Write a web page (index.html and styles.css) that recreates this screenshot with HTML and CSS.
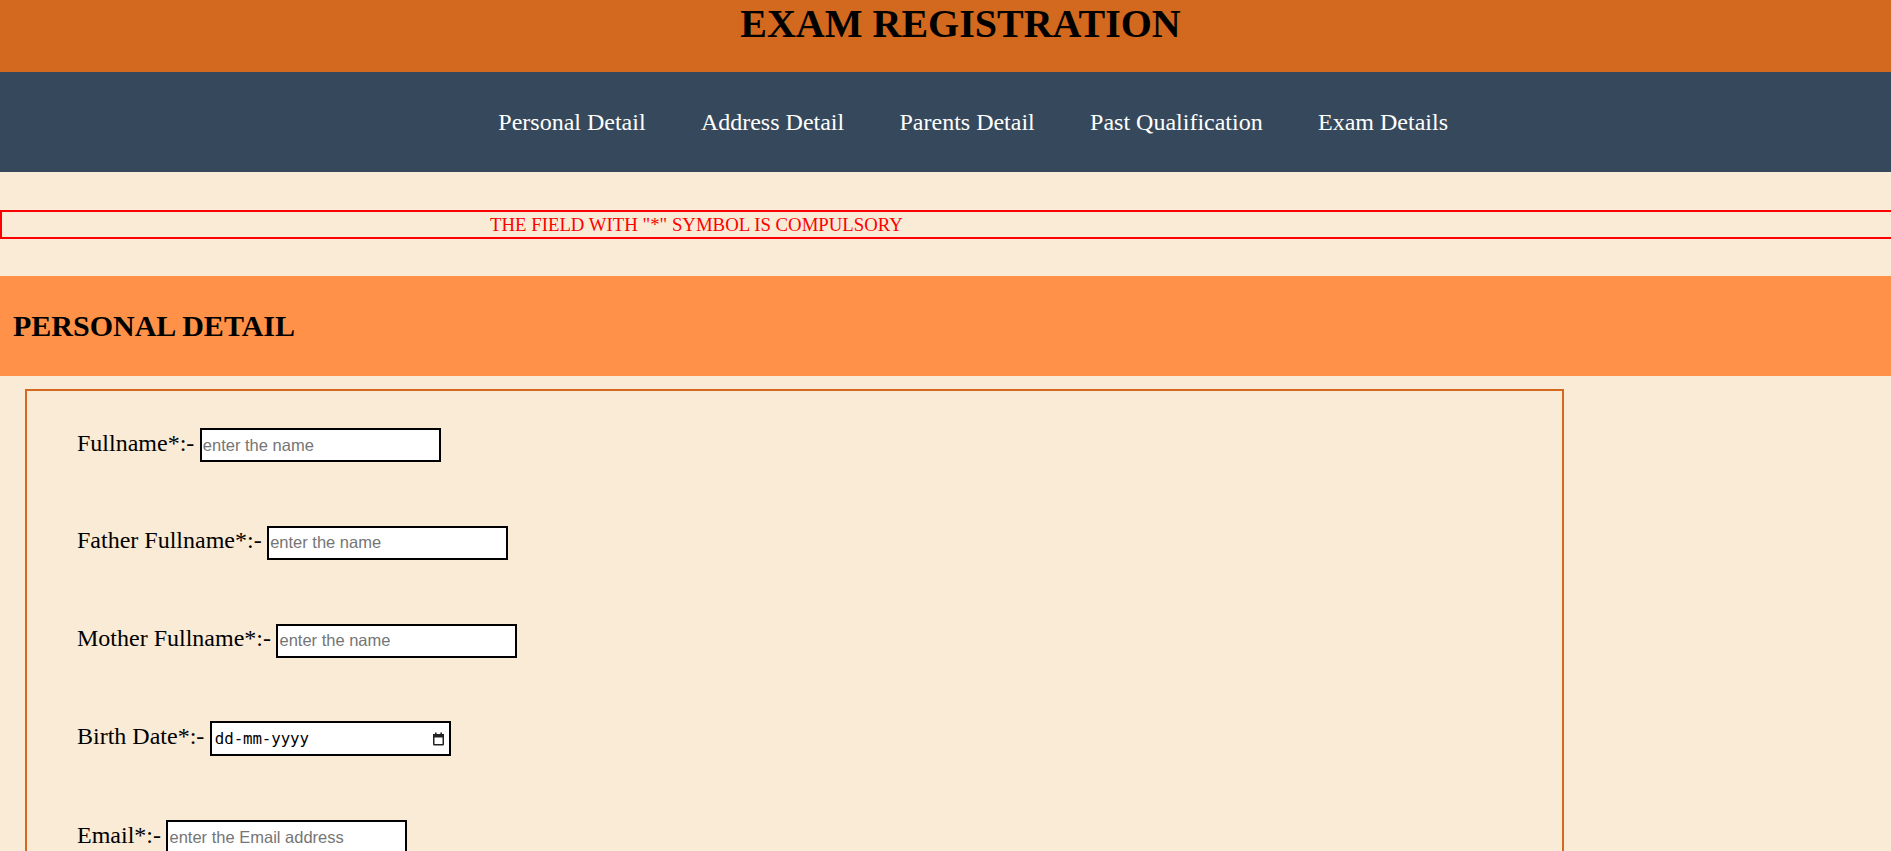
FILE: index.html
```html
<!DOCTYPE html>
<html lang="en">
<head>
<meta charset="utf-8">
<title>Exam Registration</title>
<link rel="stylesheet" href="styles.css">
</head>
<body>
<header class="top">
  <h1>EXAM REGISTRATION</h1>
</header>
<nav class="nav">
  <a href="#personal">Personal Detail</a>
  <a href="#address">Address Detail</a>
  <a href="#parents">Parents Detail</a>
  <a href="#past">Past Qualification</a>
  <a href="#exam">Exam Details</a>
</nav>
<div class="notice">THE FIELD WITH "*" SYMBOL IS COMPULSORY</div>
<section class="section" id="personal">
  <h2>PERSONAL DETAIL</h2>
</section>
<form class="box">
  <div class="row">
    <label for="fn">Fullname*:-</label>
    <input class="field" id="fn" type="text" placeholder="enter the name">
  </div>
  <div class="row">
    <label for="ffn">Father Fullname*:-</label>
    <input class="field" id="ffn" type="text" placeholder="enter the name">
  </div>
  <div class="row">
    <label for="mfn">Mother Fullname*:-</label>
    <input class="field" id="mfn" type="text" placeholder="enter the name">
  </div>
  <div class="row">
    <label for="bd">Birth Date*:-</label>
    <div class="date">
      <input class="date-text" id="bd" type="text" placeholder="dd-mm-yyyy">
      <svg class="cal" width="13" height="14" viewBox="0 0 13 14" aria-hidden="true">
        <rect x="1.75" y="2.75" width="9.5" height="10" fill="none" stroke="#222" stroke-width="1.5" rx="0.5"/>
        <rect x="1" y="2" width="11" height="3.5" fill="#222"/>
        <rect x="3" y="0.5" width="1.6" height="2.5" fill="#222"/>
        <rect x="8.4" y="0.5" width="1.6" height="2.5" fill="#222"/>
      </svg>
    </div>
  </div>
  <div class="row">
    <label for="em">Email*:-</label>
    <input class="field" id="em" type="email" placeholder="enter the Email address">
  </div>
</form>
</body>
</html>
```

FILE: styles.css
```css
* {
  box-sizing: border-box;
}

body {
  margin: 0;
  background: #faebd7;
  font-family: "Liberation Serif", "Times New Roman", serif;
  color: #000;
}

.top {
  background: #d2691e;
  height: 72px;
}

.top h1 {
  margin: 0;
  padding-left: 30px;
  text-align: center;
  font-size: 40px;
  font-weight: bold;
}

.nav {
  background: #36495c;
  height: 100px;
  display: flex;
  justify-content: center;
  align-items: center;
}

.nav a {
  color: #fff;
  text-decoration: none;
  font-size: 24px;
  margin-left: 55.3px;
}

.notice {
  margin-top: 38px;
  border: 2px solid #ff0000;
  border-right: 0;
  height: 29px;
  padding-left: 488px;
  color: #ff0000;
  font-size: 18.8px;
  line-height: 25px;
}

.section {
  margin-top: 37px;
  background: #ff9248;
  height: 100px;
  display: flex;
  align-items: center;
  padding-left: 13px;
}

.section h2 {
  margin: 0;
  font-size: 30px;
  font-weight: bold;
}

.box {
  margin: 13px 0 0 25px;
  width: 1539px;
  border: 2px solid #d2691e;
  padding: 37px 0 60px 50px;
  display: flex;
  flex-direction: column;
  gap: 63.8px;
}

.row {
  display: flex;
  align-items: baseline;
  gap: 5.5px;
}

.row label {
  font-size: 24px;
}

.field {
  width: 241px;
  height: 34px;
  border: 2px solid #000;
  padding: 1px 1px;
  margin: 0;
  background: #fff;
  font-family: "Liberation Sans", Arial, sans-serif;
  font-size: 16.5px;
  color: #000;
  outline: none;
}

.field::placeholder {
  color: #757575;
}

.date {
  width: 241px;
  height: 35px;
  border: 2px solid #000;
  background: #fff;
  display: flex;
  align-items: center;
  padding: 0 4px 0 2px;
}

.date-text {
  flex: 1;
  min-width: 0;
  border: 0;
  padding: 0 0 0 1px;
  margin: 0;
  background: transparent;
  font-family: "DejaVu Sans Mono", "Liberation Mono", monospace;
  font-size: 15.8px;
  letter-spacing: -0.1px;
  color: #000;
  outline: none;
}

.date-text::placeholder {
  color: #000;
}

.cal {
  flex: none;
}
```
